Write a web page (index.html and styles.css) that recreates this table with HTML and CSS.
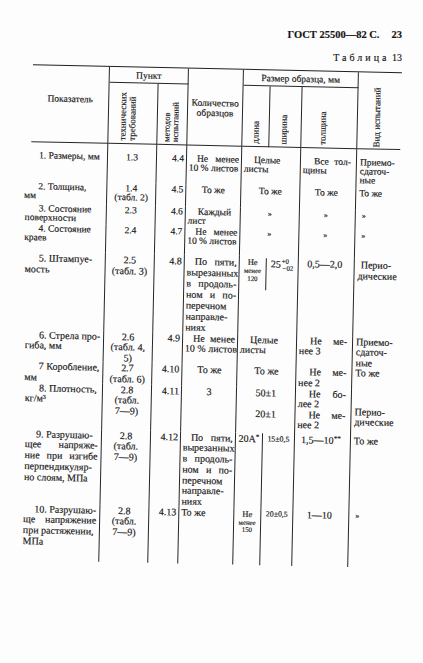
FILE: index.html
```html
<!DOCTYPE html>
<html lang="ru">
<head>
<meta charset="utf-8">
<title>ГОСТ 25500—82 С. 23</title>
<link rel="stylesheet" href="styles.css">
</head>
<body>
<div class="page">
  <div class="head"><span>ГОСТ 25500—82 С.</span><span class="pg">23</span></div>
  <div class="tabno"><span class="sp">Таблица</span> 13</div>
  <div class="sheet">
    <div class="rule"></div>
    <div class="grid">
      <!-- header -->
      <div class="h h-pok">Показатель</div>
      <div class="h h-punkt">Пункт</div>
      <div class="h h-kol"><div>Количество</div><div>образцов</div></div>
      <div class="h h-razm">Размер образца, мм</div>
      <div class="h h-vid"><div class="rot">Вид испытаний</div></div>
      <div class="h h-tech"><div class="rot">технических<br>требований</div></div>
      <div class="h h-met"><div class="rot rot-tight">методов<br>испытаний</div></div>
      <div class="h h-dl"><div class="rot">длина</div></div>
      <div class="h h-sh"><div class="rot">ширина</div></div>
      <div class="h h-tol"><div class="rot">толщина</div></div>

      <!-- 1 -->
      <div class="row r1">
        <div class="c c1"><div class="l i1">1. Размеры, мм</div></div>
        <div class="c c2"><div class="l">1.3</div></div>
        <div class="c c3"><div class="l">4.4</div></div>
        <div class="c c4"><div class="l i j">Не менее</div><div class="l">10 % листов</div></div>
        <div class="c c56"><div class="l i2">Целые</div><div class="l">листы</div></div>
        <div class="c c7"><div class="l i3 j">Все тол-</div><div class="l">щины</div></div>
        <div class="n c8"><div class="l">Приемо-</div><div class="l">сдаточ-</div><div class="l">ные</div></div>
      </div>

      <!-- 2 -->
      <div class="row r2">
        <div class="c c1"><div class="l i1">2. Толщина,</div><div class="l">мм</div></div>
        <div class="c c2"><div class="l">1.4</div><div class="l">(табл. 2)</div></div>
        <div class="c c3"><div class="l">4.5</div></div>
        <div class="c c4 ctr"><div class="l">То же</div></div>
        <div class="c c56 ctr"><div class="l">То же</div></div>
        <div class="c c7 ctr"><div class="l">То же</div></div>
        <div class="n c8"><div class="l">То же</div></div>
      </div>

      <!-- 3 -->
      <div class="row r3">
        <div class="c c1"><div class="l i1">3. Состояние</div><div class="l">поверхности</div></div>
        <div class="c c2"><div class="l">2.3</div></div>
        <div class="c c3"><div class="l">4.6</div></div>
        <div class="c c4"><div class="l i2">Каждый</div><div class="l">лист</div></div>
        <div class="c c56 ctr"><div class="l q">»</div></div>
        <div class="c c7 ctr"><div class="l q">»</div></div>
        <div class="n c8"><div class="l q qi">»</div></div>
      </div>

      <!-- 4 -->
      <div class="row r4">
        <div class="c c1"><div class="l i1">4. Состояние</div><div class="l">краев</div></div>
        <div class="c c2"><div class="l">2.4</div></div>
        <div class="c c3"><div class="l">4.7</div></div>
        <div class="c c4"><div class="l i j">Не менее</div><div class="l">10 % листов</div></div>
        <div class="c c56 ctr"><div class="l q">»</div></div>
        <div class="c c7 ctr"><div class="l q">»</div></div>
        <div class="n c8"><div class="l q qi">»</div></div>
      </div>

      <!-- 5 -->
      <div class="row r5">
        <div class="c c1"><div class="l i1">5. Штампуе-</div><div class="l">мость</div></div>
        <div class="c c2"><div class="l">2.5</div><div class="l">(табл. 3)</div></div>
        <div class="c c3"><div class="l">4.8</div></div>
        <div class="c c4">
          <div class="l i j">По пяти,</div><div class="l">вырезанных</div><div class="l j">в продоль-</div><div class="l j">ном и по-</div><div class="l">перечном</div><div class="l">направле-</div><div class="l">ниях</div>
        </div>
        <div class="n c5 dl5"><div class="mini"><div class="ne">Не</div><div>менее</div><div>120</div></div></div>
        <div class="c c6 sh5"><span class="base">25</span><span class="tol"><span>+0</span><span>−02</span></span></div>
        <div class="c c7 ctr"><div class="l">0,5—2,0</div></div>
        <div class="n c8"><div class="l qi">Перио-</div><div class="l">дические</div></div>
      </div>

      <!-- 6 -->
      <div class="row r6">
        <div class="c c1"><div class="l i1 j">6. Стрела про-</div><div class="l">гиба, мм</div></div>
        <div class="c c2"><div class="l">2.6</div><div class="l">(табл. 4,</div><div class="l">5)</div></div>
        <div class="c c3"><div class="l">4.9</div></div>
        <div class="c c4"><div class="l i j">Не менее</div><div class="l">10 % листов</div></div>
        <div class="c c56"><div class="l i2">Целые</div><div class="l">листы</div></div>
        <div class="c c7"><div class="l i3 j">Не ме-</div><div class="l">нее 3</div></div>
        <div class="n c8"><div class="l">Приемо-</div><div class="l">сдаточ-</div><div class="l">ные</div></div>
      </div>

      <!-- 7 -->
      <div class="row r7">
        <div class="c c1"><div class="l i1 j">7 Коробление,</div><div class="l">мм</div></div>
        <div class="c c2"><div class="l">2.7</div><div class="l">(табл. 6)</div></div>
        <div class="c c3"><div class="l">4.10</div></div>
        <div class="c c4 ctr"><div class="l">То же</div></div>
        <div class="c c56 ctr"><div class="l">То же</div></div>
        <div class="c c7"><div class="l i3 j">Не ме-</div><div class="l">нее 2</div></div>
        <div class="n c8"><div class="l">То же</div></div>
      </div>

      <!-- 8 -->
      <div class="row r8">
        <div class="c c1"><div class="l i1">8. Плотность,</div><div class="l">кг/м³</div></div>
        <div class="c c2"><div class="l">2.8</div><div class="l">(табл.</div><div class="l">7—9)</div></div>
        <div class="c c3"><div class="l">4.11</div></div>
        <div class="c c4 ctr"><div class="l">3</div></div>
        <div class="c c56 ctr"><div class="l">50±1</div><div class="l gap">20±1</div></div>
        <div class="c c7"><div class="l i3 j">Не бо-</div><div class="l">лее 2</div><div class="l i3 j">Не ме-</div><div class="l">нее 2</div></div>
        <div class="n c8 low"><div class="l">Перио-</div><div class="l">дические</div></div>
      </div>

      <!-- 9 -->
      <div class="row r9">
        <div class="c c1"><div class="l i4">9. Разрушаю-</div><div class="l j">щее напряже-</div><div class="l j">ние при изгибе</div><div class="l">перпендикуляр-</div><div class="l">но слоям, МПа</div></div>
        <div class="c c2"><div class="l">2.8</div><div class="l">(табл.</div><div class="l">7—9)</div></div>
        <div class="c c3"><div class="l">4.12</div></div>
        <div class="c c4">
          <div class="l i j">По пяти,</div><div class="l">вырезанных</div><div class="l j">в продоль-</div><div class="l j">ном и по-</div><div class="l">перечном</div><div class="l">направле-</div><div class="l">ниях</div>
        </div>
        <div class="c c5 ctr"><div class="l">20А<sup class="st">*</sup></div></div>
        <div class="c c6 ctr"><div class="l sm">15±0,5</div></div>
        <div class="c c7 ctr"><div class="l">1,5—10<sup class="st">**</sup></div></div>
        <div class="n c8"><div class="l">То же</div></div>
      </div>

      <!-- 10 -->
      <div class="row r10">
        <div class="c c1"><div class="l i4">10. Разрушаю-</div><div class="l j">ще напряжение</div><div class="l">при растяжении,</div><div class="l">МПа</div></div>
        <div class="c c2"><div class="l">2.8</div><div class="l">(табл.</div><div class="l">7—9)</div></div>
        <div class="c c3"><div class="l">4.13</div></div>
        <div class="c c4"><div class="l">То же</div></div>
        <div class="c c5"><div class="mini"><div class="ne">Не</div><div>менее</div><div>150</div></div></div>
        <div class="c c6 ctr"><div class="l sm">20±0,5</div></div>
        <div class="c c7 ctr"><div class="l">1—10</div></div>
        <div class="n c8"><div class="l q qi">»</div></div>
      </div>
    </div>
  </div>
</div>
</body>
</html>
```

FILE: styles.css
```css
html, body {
  margin: 0;
  padding: 0;
  background: #fdfdfd;
}

.page {
  width: 423px;
  height: 663px;
  overflow: hidden;
  background: #fdfdfd;
  color: #161616;
  font-family: "Liberation Serif", "Times New Roman", "DejaVu Serif", serif;
  -webkit-text-stroke: 0.15px #161616;
}

.head {
  padding-top: 28px;
  height: 14px;
  line-height: 14px;
  padding-right: 21px;
  text-align: right;
  font-weight: bold;
  font-size: 10.5px;
}

.head .pg {
  margin-left: 12px;
}

.tabno {
  margin-top: 10px;
  height: 12px;
  line-height: 12px;
  padding-right: 21px;
  text-align: right;
  font-size: 10px;
}

.tabno .sp {
  letter-spacing: 3px;
}

.sheet {
  margin-left: 26px;
  width: 376px;
  transform: rotate(1.24deg);
  transform-origin: 0 0;
}

.rule {
  margin-left: 7px;
  border-top: 1.5px solid #202020;
}

.grid {
  display: grid;
  grid-template-columns: 84px 49px 30px 55px 27px 32px 56px 43px;
  grid-template-rows: 16px 60.5px 39.5px 22px 20px 28px 77.5px 31.5px 21.5px 46px 75px 57px;
  font-size: 9.5px;
}

/* header */
.h {
  box-sizing: border-box;
  border-bottom: 1px solid #262626;
  border-right: 1px solid #262626;
  display: flex;
  justify-content: center;
  align-items: center;
  text-align: center;
  font-size: 9.5px;
  line-height: 10px;
}

.h-pok {
  grid-row: span 2;
  margin-left: 7px;
  padding-bottom: 9px;
}

.h-punkt {
  grid-column: span 2;
}

.h-kol {
  grid-row: span 2;
  flex-direction: column;
  padding-top: 2px;
}

.h-razm {
  grid-column: span 3;
  padding-top: 1px;
}

.h-vid {
  grid-row: span 2;
  border-right: none;
  justify-content: flex-start;
  align-items: flex-end;
  padding-left: 15px;
  padding-bottom: 1px;
}

.h-tech,
.h-met,
.h-dl,
.h-sh,
.h-tol {
  justify-content: flex-start;
  align-items: flex-end;
  padding-bottom: 2px;
}

.h-tech { padding-left: 10px; }
.h-met { padding-left: 5px; }
.h-dl { padding-left: 9px; }
.h-sh { padding-left: 10px; }
.h-tol { padding-left: 17px; }

.rot {
  writing-mode: vertical-rl;
  transform: rotate(180deg);
  white-space: nowrap;
  text-align: start;
  font-size: 9px;
  line-height: 9.5px;
}

.rot-tight {
  line-height: 8.5px;
  font-size: 8.5px;
}

/* body rows */
.row {
  display: contents;
}

.c,
.n {
  box-sizing: border-box;
  padding-top: 1px;
  min-width: 0;
}

.c {
  border-right: 1px solid #262626;
}

.l {
  white-space: nowrap;
}

.r1, .r2, .r3, .r4 {
  line-height: 9px;
  font-size: 9.5px;
}

.r1 > .c,
.r1 > .n {
  padding-top: 9.5px;
}

.r5 {
  line-height: 11px;
  font-size: 10px;
}

.r6, .r7, .r8 {
  line-height: 10.5px;
  font-size: 10px;
}

.r9, .r10 {
  line-height: 10.8px;
  font-size: 10px;
}

.c1 {
  padding-left: 1px;
  padding-right: 3px;
  text-align: left;
}

/* the scan drifts: the left edge of column 1 stays put while the rules lean */
.r3 > .c1, .r4 > .c1 { padding-left: 2px; }
.r5 > .c1 { padding-left: 3px; }
.r6 > .c1, .r7 > .c1 { padding-left: 5px; }
.r8 > .c1 { padding-left: 6px; }
.r9 > .c1, .r10 > .c1 { padding-left: 7px; padding-right: 3px; }

.c2 {
  text-align: center;
}

.c3 {
  text-align: right;
  padding-right: 2px;
}

.c4 {
  padding-left: 2px;
  padding-right: 2px;
}

.c56 {
  grid-column: span 2;
  padding-left: 2px;
  padding-right: 2px;
}

.c7 {
  padding-left: 2px;
  padding-right: 5px;
}

.c8 {
  padding-left: 3px;
}

.ctr {
  text-align: center;
}

.j {
  text-align: justify;
  text-align-last: justify;
}

.i1 { padding-left: 14px; }
.i4 { padding-left: 11px; }
.i { padding-left: 8px; }
.i2 { padding-left: 10px; }
.i3 { padding-left: 11px; }

.q {
  font-size: 8px;
}

.qi {
  padding-left: 3px;
}

.gap {
  margin-top: 10.5px;
}

.low {
  padding-top: 18px;
}

.sm {
  font-size: 7.8px;
}

.st {
  font-size: 7px;
  vertical-align: 3px;
  line-height: 0;
}

/* row 5 length / width */
.dl5 {
  padding-top: 2px;
}

.dl5 .mini {
  border-right: 1px solid #262626;
  height: 32px;
}

.mini {
  text-align: center;
  font-size: 6.8px;
  line-height: 7.8px;
}

.mini .ne {
  font-size: 8.5px;
  line-height: 9px;
}

.r10 .c5 {
  padding-top: 2px;
}

.sh5 {
  padding-left: 4px;
  padding-top: 1px;
  display: flex;
  align-items: flex-start;
}

.sh5 .base {
  font-size: 10px;
  line-height: 11px;
  padding-top: 1px;
}

.tol {
  display: flex;
  flex-direction: column;
  font-size: 6.8px;
  line-height: 7px;
  padding-left: 1px;
}

.tol span:last-child {
  padding-left: 1px;
}
```
